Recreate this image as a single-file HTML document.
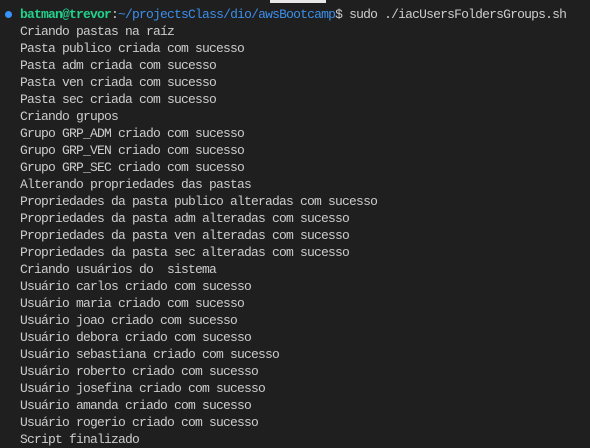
<!DOCTYPE html>
<html><head><style>
html,body{margin:0;padding:0;background:#1f1f1f;width:590px;height:448px;overflow:hidden}
pre{margin:0;position:absolute;left:20px;top:6px;font-family:"Liberation Mono",monospace;font-size:13px;letter-spacing:-0.8px;line-height:17px;color:#cccccc}
.g{color:#23d18b;font-weight:bold}.b{color:#3b8eea}
.dot{position:absolute;left:5px;top:11px;width:7px;height:7px;border-radius:50%;background:#3794ff}
.bar{position:absolute;left:270px;top:0;width:56px;height:3px;background:#e8e8e8}
</style></head><body>
<div class="bar"></div><div class="dot"></div>
<pre><span class="g">batman@trevor</span>:<span class="b">~/projectsClass/dio/awsBootcamp</span>$ sudo ./iacUsersFoldersGroups.sh
Criando pastas na raíz
Pasta publico criada com sucesso
Pasta adm criada com sucesso
Pasta ven criada com sucesso
Pasta sec criada com sucesso
Criando grupos
Grupo GRP_ADM criado com sucesso
Grupo GRP_VEN criado com sucesso
Grupo GRP_SEC criado com sucesso
Alterando propriedades das pastas
Propriedades da pasta publico alteradas com sucesso
Propriedades da pasta adm alteradas com sucesso
Propriedades da pasta ven alteradas com sucesso
Propriedades da pasta sec alteradas com sucesso
Criando usuários do  sistema
Usuário carlos criado com sucesso
Usuário maria criado com sucesso
Usuário joao criado com sucesso
Usuário debora criado com sucesso
Usuário sebastiana criado com sucesso
Usuário roberto criado com sucesso
Usuário josefina criado com sucesso
Usuário amanda criado com sucesso
Usuário rogerio criado com sucesso
Script finalizado</pre>
</body></html>
